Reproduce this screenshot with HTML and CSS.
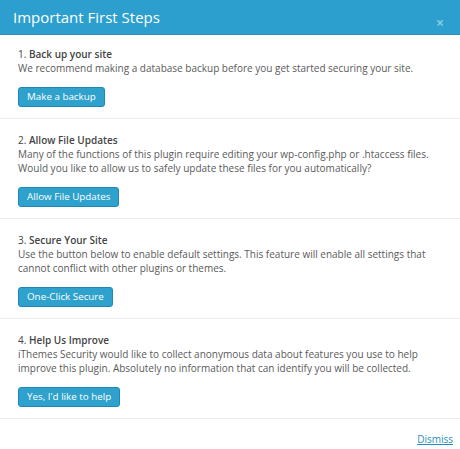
FILE: index.html
```html
<!DOCTYPE html>
<html>
<head>
<meta charset="utf-8">
<link rel="stylesheet" href="styles.css">
</head>
<body>
<div class="modal">
  <div class="header">
    <h1 class="title">Important First Steps</h1>
    <span class="close">&times;</span>
  </div>
  <div class="step first">
    <div class="step-title">1. <strong>Back up your site</strong></div>
    <p class="desc">We recommend making a database backup before you get started securing your site.</p>
    <span class="btn">Make a backup</span>
  </div>
  <div class="step">
    <div class="step-title">2. <strong>Allow File Updates</strong></div>
    <p class="desc">Many of the functions of this plugin require editing your wp-config.php or .htaccess files.<br>Would you like to allow us to safely update these files for you automatically?</p>
    <span class="btn">Allow File Updates</span>
  </div>
  <div class="step">
    <div class="step-title">3. <strong>Secure Your Site</strong></div>
    <p class="desc">Use the button below to enable default settings. This feature will enable all settings that<br>cannot conflict with other plugins or themes.</p>
    <span class="btn">One-Click Secure</span>
  </div>
  <div class="step">
    <div class="step-title">4. <strong>Help Us Improve</strong></div>
    <p class="desc">iThemes Security would like to collect anonymous data about features you use to help<br>improve this plugin. Absolutely no information that can identify you will be collected.</p>
    <span class="btn">Yes, I'd like to help</span>
  </div>
  <div class="footer">
    <a class="dismiss" href="#">Dismiss</a>
  </div>
</div>
</body>
</html>
```
FILE: styles.css
```css
html, body {
  margin: 0;
  padding: 0;
  background: #ffffff;
}
body {
  font-family: "Open Sans", "Liberation Sans", sans-serif;
  color: #555555;
}
.modal {
  width: 460px;
}
.header {
  height: 34px;
  background: #2c9fcf;
  border-bottom: 1px solid #2a8fbb;
  display: flex;
  align-items: center;
  justify-content: space-between;
  padding: 0 16px 0 13px;
}
.title {
  margin: 0;
  font-size: 15px;
  font-weight: 400;
  color: #ffffff;
  line-height: 20px;
  margin-top: 0;
}
.close {
  color: #86c9e5;
  font-size: 14px;
  font-weight: 700;
  line-height: 1;
  margin-top: 11px;
}
.step {
  padding: 14px 18px 11px;
  border-bottom: 1px solid #ececec;
  display: flex;
  flex-direction: column;
  align-items: flex-start;
}
.step.first {
  padding-top: 12px;
}
.step-title {
  font-size: 10px;
  line-height: 14px;
  color: #444444;
  white-space: nowrap;
}
.step-title strong {
  font-weight: 600;
}
.desc {
  margin: 0;
  font-size: 10px;
  line-height: 14px;
  color: #5a5a5a;
  white-space: nowrap;
}
.btn {
  margin-top: 12px;
  height: 18px;
  line-height: 18px;
  padding: 0 8px;
  background: #2ea2cc;
  border: 1px solid #1f87b3;
  border-radius: 3px;
  color: #ffffff;
  font-size: 9.8px;
}
.footer {
  display: flex;
  justify-content: flex-end;
  padding: 13px 7px 0 0;
}
.dismiss {
  font-size: 10px;
  line-height: 14px;
  color: #1d8fbf;
}
```
